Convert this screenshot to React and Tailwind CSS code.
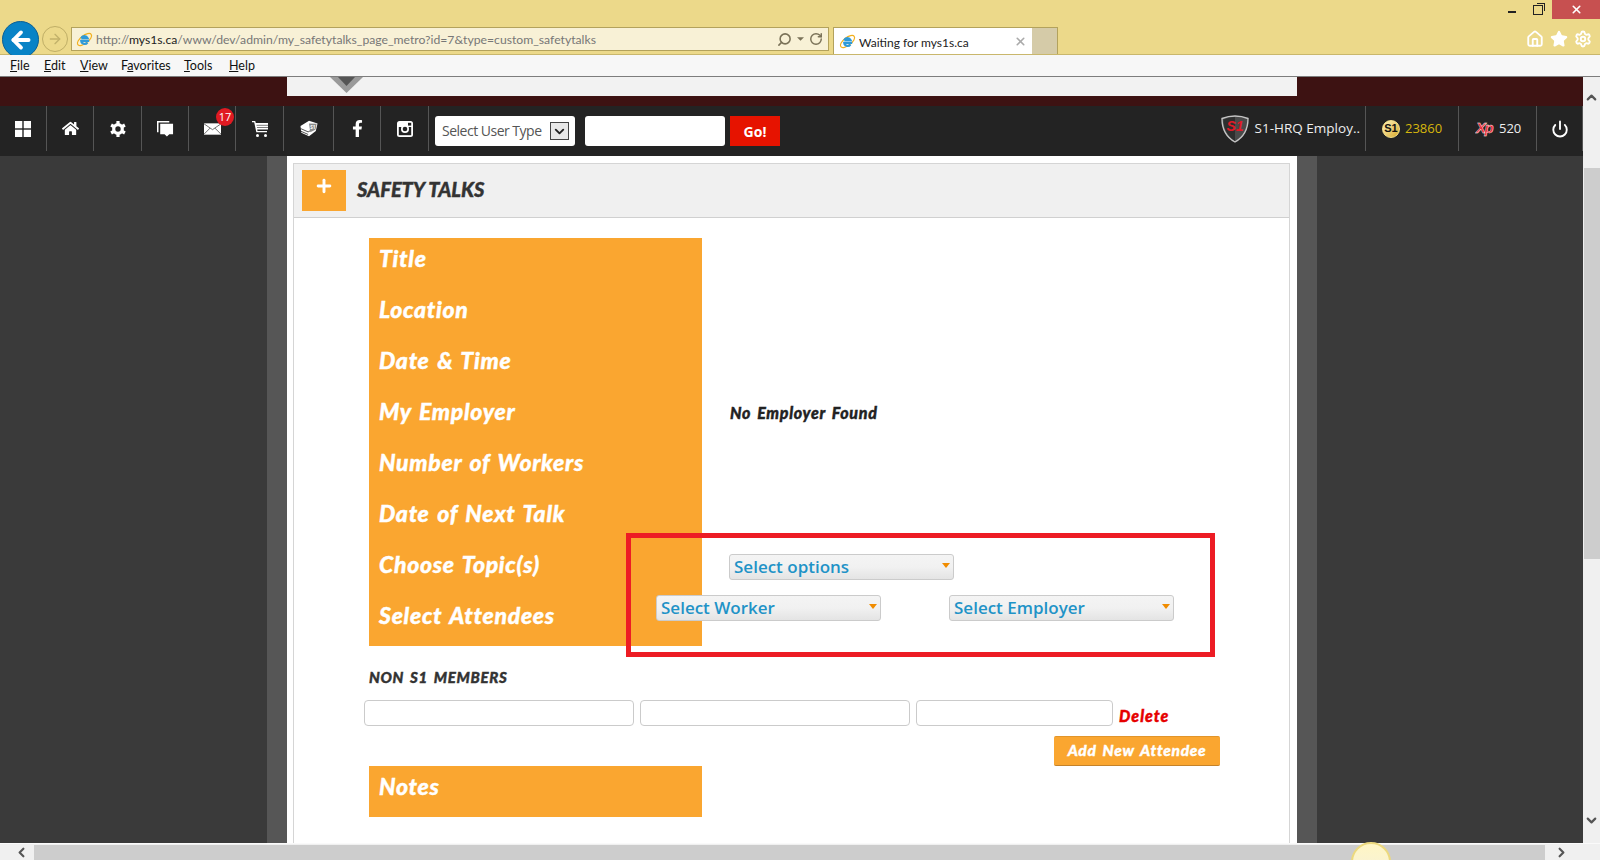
import { ArrowLeft, ArrowRight, ChevronDown, ChevronLeft, ChevronRight, ChevronUp, Home, Plus, Power, RotateCw, Search, Settings, Star, X } from 'lucide-react';
import { FaFacebookF, FaHome } from 'react-icons/fa';

const sans = 'font-["Open_Sans",sans-serif]';
const chrome = 'font-["Lato",sans-serif]';
const heavy = 'font-["Lato",sans-serif] font-black italic tracking-[0.7px] [word-spacing:2px] [-webkit-text-stroke:0.4px]';

function IeLogo({ className }) {
  return (
    <svg viewBox="0 0 20 20" className={className}>
      <ellipse cx="10" cy="10" rx="10" ry="4.5" transform="rotate(-38 10 10)" fill="none" stroke="#f2b01e" strokeWidth="1.4" />
      <path d="M15.5 11.5H6.2a4 4 0 0 0 7.2 2M6.2 8.5h7.4a4 4 0 0 0-7.4 0" fill="none" stroke="#2f9ad8" strokeWidth="2.6" />
    </svg>
  );
}

function GridIcon() {
  return (
    <svg viewBox="0 0 16 16" className="w-[16px] h-[16px]" fill="#fff">
      <rect width="7.300" height="7.300" />
      <rect x="8.700" width="7.300" height="7.300" />
      <rect y="8.700" width="7.300" height="7.300" />
      <rect x="8.700" y="8.700" width="7.300" height="7.300" />
    </svg>
  );
}

function GearIcon() {
  return (
    <svg viewBox="0 0 16 16" className="w-[16px] h-[16px]" fill="none" stroke="#fff">
      <circle cx="8" cy="8" r="4.300" strokeWidth="3.200" />
      <path d="M8 0v3M8 13v3M1.100 4l2.600 1.500M12.300 10.500l2.600 1.500M1.100 12l2.600-1.500M12.300 5.500L14.900 4" strokeWidth="3.200" />
    </svg>
  );
}

function CommentsIcon() {
  return (
    <svg viewBox="0 0 18 18" className="w-[17px] h-[17px]" fill="#fff">
      <path d="M0 1h13v1.600H1.600V13H0z" />
      <path d="M3.400 4H17v11h-4l-2.500 2.600L8 15H3.400z" />
    </svg>
  );
}

function MailIcon() {
  return (
    <svg viewBox="0 0 18 12" className="w-[17px] h-[12px]">
      <rect width="18" height="12" fill="#fff" />
      <path d="M0 .5l9 6.200 9-6.200M0 11.500l6.500-6.500M18 11.500L11.500 5" fill="none" stroke="#444" strokeWidth=".8" />
    </svg>
  );
}

function CartIcon() {
  return (
    <svg viewBox="0 0 16 16" className="w-[16px] h-[16px]" fill="#fff">
      <path d="M0 0h3.200l.6 2H16v6.500H5.200l.3 1.500H15v1.300H4.300L2.200 1.300H0z" />
      <path d="M4.500 4.300H16M5 6.500h11" stroke="#232323" strokeWidth=".6" />
      <circle cx="5.500" cy="14.500" r="1.500" />
      <circle cx="13.500" cy="14.500" r="1.500" />
    </svg>
  );
}

function BooksIcon() {
  return (
    <svg viewBox="0 0 22 20" className="w-[20px] h-[17px]">
      <path d="M1 7l10-6 10 3-2 9-8 6-9-4z" fill="#fff" />
      <path d="M1 10l9 4 9-5M1 13l9 4" fill="none" stroke="#333" strokeWidth="1" />
      <path d="M11 4l9 .5-1.500 7-6 3z" fill="#8a8a8a" />
      <text x="12.500" y="10.500" fontSize="5.500" fontWeight="700" fill="#fff" fontFamily="Open Sans">S1</text>
    </svg>
  );
}

function InstagramIcon() {
  return (
    <svg viewBox="0 0 16 16" className="w-[16px] h-[16px]">
      <rect width="16" height="16" rx="2.500" fill="#fff" />
      <rect x="1.800" y="6" width="12.400" height="8.200" fill="#232323" />
      <rect x="11" y="1.800" width="3.200" height="2.800" fill="#232323" />
      <circle cx="8" cy="8" r="4" fill="#fff" />
      <circle cx="8" cy="8" r="2.300" fill="#232323" />
    </svg>
  );
}

function ShieldLogo() {
  return (
    <svg viewBox="0 0 28 28" className="w-[28px] h-[28px]">
      <path d="M1 3.500C6 1.500 10 1 14 1s8 .5 13 2.500c0 10-4 18.500-13 23.500C5 22 1 13.500 1 3.500z" fill="#4a4a4a" stroke="#c4c4c4" strokeWidth="1.400" />
      <path d="M14 2v24C6 21 2.500 13 2.500 4.500 7 2.800 10 2.200 14 2z" fill="#2e2e2e" />
      <text x="5.500" y="16" fontSize="14" fontWeight="800" fontStyle="italic" fill="#e01a28" fontFamily="Liberation Sans">S1</text>
    </svg>
  );
}

function XpLogo() {
  return (
    <svg viewBox="0 0 24 20" className="w-[24px] h-[20px]">
      <text x="1" y="14" fontSize="15" fontWeight="800" fontStyle="italic" letterSpacing="-1.500" fill="#ef1c2c" stroke="#fff" strokeWidth=".4" fontFamily="Liberation Sans">Xp</text>
    </svg>
  );
}

function Dropdown({ label, className }) {
  return (
    <div className={`w-[225px] h-[26px] flex justify-between rounded-[3px] border border-[#cbcbcb] bg-gradient-to-b from-[#f4f4f4] via-[#f1f1f1] to-[#e4e4e4] pl-1 pr-[3px] ${className}`}>
      <span className={`${sans} text-[17px] font-semibold leading-[23px] text-[#1f93c7]`}>{label}</span>
      <svg viewBox="0 0 8 5" className="w-[8px] h-[5px] mt-[8px] fill-[#f08c00]"><path d="M0 0h8L4 5z" /></svg>
    </div>
  );
}

function FieldLabel({ children }) {
  return (
    <div className={`w-[333px] h-[51px] shrink-0 bg-[#faa630] pl-[10px] pt-[3px] ${heavy} text-[23px] leading-[34px] text-white`}>
      {children}
    </div>
  );
}

function Row({ label, children }) {
  return (
    <div className="flex">
      <FieldLabel>{label}</FieldLabel>
      {children}
    </div>
  );
}

function NavCell({ width, children }) {
  return (
    <div className={`relative ${width} h-[45px] shrink-0 flex items-center justify-center border-r border-[#555]`}>
      {children}
    </div>
  );
}

function Menu() {
  return (
    <div className={`relative z-10 h-[22px] flex items-center bg-[#f7f7f7] border-b border-[#7d7d7d] pl-[10px] pt-[2px] text-[12.500px] text-[#111] ${chrome}`}>
      <span className="w-[34px]"><u>F</u>ile</span>
      <span className="w-[36px]"><u>E</u>dit</span>
      <span className="w-[41px]"><u>V</u>iew</span>
      <span className="w-[63px]">F<u>a</u>vorites</span>
      <span className="w-[45px]"><u>T</u>ools</span>
      <span><u>H</u>elp</span>
    </div>
  );
}

function BrowserBar() {
  return (
    <div className="h-[55px] bg-[#ecd98a] border-b border-[#c9b76c]">
      {/* window buttons */}
      <div className="h-[27px] flex justify-end items-start">
        <div className="w-[8px] h-[2px] bg-[#222] mt-[11px] mr-[17px]" />
        <div className="relative w-[10px] h-[10px] mt-[5px] mr-[9px] border-[1.5px] border-[#222]">
          <div className="absolute -top-[3px] -right-[3px] w-[8px] h-[8px] border-t-[1.5px] border-r-[1.5px] border-[#222]" />
        </div>
        <div className="w-[48px] h-[19px] bg-[#c75050] flex items-center justify-center">
          <X size={13} strokeWidth={3} color="#fff" />
        </div>
      </div>
      {/* address row */}
      <div className="h-[27px] flex items-start">
        <div className="ml-[2px] -mt-[6px] w-[37px] h-[37px] shrink-0 rounded-full bg-[#0883c6] border border-[#0a5f94] flex items-center justify-center">
          <ArrowLeft size={26} strokeWidth={3.5} color="#fff" />
        </div>
        <div className="ml-[3px] -mt-[1px] w-[26px] h-[26px] shrink-0 rounded-full border border-[#bfae66] flex items-center justify-center">
          <ArrowRight size={16} color="#c2b16a" />
        </div>
        <div className={`ml-[3px] w-[758px] h-[24px] shrink-0 flex items-center bg-[#f8f1d6] border border-[#b3a25c] pl-[4px] pr-[5px] ${chrome} text-[12.200px]`}>
          <IeLogo className="w-[17px] h-[17px] shrink-0" />
          <span className="ml-[3px] pt-[3px] text-[#777]">http://<span className="text-[#222]">mys1s.ca</span>/www/dev/admin/my_safetytalks_page_metro?id=7&amp;type=custom_safetytalks</span>
          <Search size={15} strokeWidth={2.5} color="#7a7258" className="ml-auto -scale-x-100" />
          <svg viewBox="0 0 8 4" className="ml-[5px] w-[7px] h-[4px] fill-[#7a7258]"><path d="M0 0h8L4 4z" /></svg>
          <RotateCw size={14} strokeWidth={2.5} color="#7a7258" className="ml-[5px]" />
        </div>
        <div className={`ml-[4px] w-[199px] h-[27px] shrink-0 flex items-center bg-white border-l border-t border-[#b3a25c] pl-[5px] pr-[5px] ${chrome} text-[12px] text-[#222]`}>
          <IeLogo className="w-[17px] h-[17px] shrink-0" />
          <span className="ml-[3px] pt-[3px]">Waiting for mys1s.ca</span>
          <X size={13} strokeWidth={3} color="#aaa" className="ml-auto" />
        </div>
        <div className="w-[26px] h-[27px] shrink-0 bg-[#d5cba8] border-t border-r border-[#b3a25c]" />
        <div className="ml-auto mr-[8px] mt-[3px] flex items-center gap-[6px]">
          <Home size={18} strokeWidth={2.5} color="#fff" />
          <Star size={18} fill="#fff" color="#fff" />
          <Settings size={18} strokeWidth={2.5} color="#fff" />
        </div>
      </div>
    </div>
  );
}

function TopNav() {
  return (
    <div className="h-[50px] flex items-start bg-[#232323]">
      <NavCell width="w-[47px]"><GridIcon /></NavCell>
      <NavCell width="w-[47px]"><FaHome size={17} color="#fff" /></NavCell>
      <NavCell width="w-[48px]"><GearIcon /></NavCell>
      <NavCell width="w-[47px]"><CommentsIcon /></NavCell>
      <NavCell width="w-[47px]">
        <MailIcon />
        <span className={`absolute left-[27px] top-[2px] w-[18px] h-[18px] rounded-full bg-[#e01a22] flex items-center justify-center ${sans} text-[11px] text-white`}>17</span>
      </NavCell>
      <NavCell width="w-[48px]"><CartIcon /></NavCell>
      <NavCell width="w-[50px]"><BooksIcon /></NavCell>
      <NavCell width="w-[47px]"><FaFacebookF size={17} color="#fff" /></NavCell>
      <NavCell width="w-[48px]"><InstagramIcon /></NavCell>

      <div className="ml-[6px] mt-[10px] w-[140px] h-[30px] shrink-0 flex items-center justify-between rounded-[3px] bg-white pl-[7px] pr-[6px]">
        <span className={`${sans} -mt-[2px] text-[14px] text-[#555] tracking-[-0.5px]`}>Select User Type</span>
        <div className="w-[19px] h-[18px] flex items-center justify-center bg-[#e8e8e8] border border-[#444]">
          <ChevronDown size={15} strokeWidth={3} color="#222" />
        </div>
      </div>
      <div className="ml-[10px] mt-[10px] w-[140px] h-[30px] shrink-0 rounded-[3px] bg-white" />
      <div className={`ml-[5px] mt-[10px] w-[50px] h-[30px] shrink-0 flex items-center justify-center bg-[#e61300] ${sans} text-[14px] font-bold text-white`}>Go!</div>

      <div className="ml-auto flex items-start">
        <div className="h-[45px] flex items-center pr-[5px] border-r border-[#555]">
          <ShieldLogo />
          <span className={`ml-[6px] ${sans} text-[13.500px] text-[#eee]`}>S1-HRQ Employ..</span>
        </div>
        <div className="w-[93px] h-[45px] flex items-center pl-[16px] border-r border-[#555]">
          <div className="w-[18px] h-[18px] rounded-full border border-[#f6e28a] bg-gradient-to-br from-[#fff4b8] to-[#d9a90f] flex items-center justify-center font-['Liberation_Sans',sans-serif] text-[11px] font-bold text-[#111]">S1</div>
          <span className={`ml-[5px] ${sans} text-[13px] text-[#d6b60c]`}>23860</span>
        </div>
        <div className="w-[78px] h-[45px] flex items-center pl-[16px] border-r border-[#555]">
          <XpLogo />
          <span className={`${sans} text-[13px] text-[#eee]`}>520</span>
        </div>
        <div className="w-[46px] h-[45px] flex items-center justify-center border-r border-[#555]">
          <Power size={18} strokeWidth={2.5} color="#fff" />
        </div>
      </div>
    </div>
  );
}

function SafetyForm() {
  return (
    <div className="relative pl-[75px] pt-[20px]">
      <Row label="Title" />
      <Row label="Location" />
      <Row label="Date & Time" />
      <Row label="My Employer">
        <span className={`ml-[28px] mt-[10px] ${heavy} text-[16px] tracking-[0.5px] text-[#222]`}>No Employer Found</span>
      </Row>
      <Row label="Number of Workers" />
      <Row label="Date of Next Talk" />
      <Row label="Choose Topic(s)">
        <Dropdown label="Select options" className="ml-[27px] mt-[10px]" />
      </Row>
      <Row label="Select Attendees">
        <div className="relative -ml-[46px] flex gap-[68px] items-start">
          <Dropdown label="Select Worker" />
          <Dropdown label="Select Employer" />
        </div>
      </Row>

      {/* annotation drawn on the screenshot */}
      <div className="absolute left-[332px] top-[315px] w-[589px] h-[124px] border-[5px] border-[#ed1c24] pointer-events-none" />

      <div className={`mt-[21px] ${heavy} text-[15px] leading-[20px] text-[#333]`}>NON S1 MEMBERS</div>

      <div className="-ml-[5px] mt-[13px] flex items-start">
        <div className="w-[270px] h-[26px] rounded-[4px] border border-[#cbcbcb] bg-white" />
        <div className="ml-[6px] w-[270px] h-[26px] rounded-[4px] border border-[#cbcbcb] bg-white" />
        <div className="ml-[6px] w-[197px] h-[26px] rounded-[4px] border border-[#cbcbcb] bg-white" />
        <span className={`ml-[6px] mt-[6px] ${heavy} text-[16px] tracking-[1px] leading-[20px] text-[#e60000]`}>Delete</span>
      </div>

      <div className="mt-[10px] mr-[69px] flex justify-end">
        <div className={`w-[166px] h-[30px] flex items-center justify-center rounded-[2px] bg-[#faa630] border-y border-t-[#e2952a] border-b-[#c4822a] ${heavy} text-[15.500px] text-white`}>
          Add New Attendee
        </div>
      </div>

      <Row label="Notes" />
    </div>
  );
}

export default function App() {
  return (
    <div className="w-[1600px] h-[860px] overflow-hidden flex flex-col bg-[#f0f0f0]">
      <BrowserBar />
      <Menu />

      <div className="h-[766px] flex">
        <div className="w-[1583px] flex flex-col">
          {/* maroon header, mostly scrolled away */}
          <div className="h-[29px] bg-[#3d1212]">
            <div className="ml-[287px] w-[1010px] h-[19px] bg-[#f2f2f2] overflow-hidden">
              <svg viewBox="0 0 33 16" className="ml-[43px] w-[33px] h-[16px]">
                <path d="M0 0h33L16.500 16z" fill="#9a9a9a" />
                <path d="M8 0h17l-8.500 9z" fill="#555" />
              </svg>
            </div>
          </div>
          <TopNav />

          <div className="h-[687px] flex overflow-hidden">
            <div className="w-[267px] shrink-0 bg-[#3a3a3a]" />
            <div className="w-[20px] shrink-0 bg-[#565656]" />
            <div className="w-[1010px] shrink-0 bg-white pl-[6px] pr-[7px] pt-[7px]">
              <div className="h-[700px] border-x border-t border-[#d5d5d5]">
                <div className="h-[54px] flex items-start bg-[#f0f0f0] border-b border-[#d0d0d0]">
                  <div className="ml-[8px] mt-[6px] w-[44px] h-[41px] flex items-start justify-center pt-[6px] bg-[#faa630]">
                    <Plus size={20} strokeWidth={3.5} color="#fff" />
                  </div>
                  <span className={`ml-[11px] mt-[11px] font-["Lato",sans-serif] font-black italic [-webkit-text-stroke:0.4px] text-[20px] leading-[28px] text-[#333]`}>SAFETY TALKS</span>
                </div>
                <SafetyForm />
              </div>
            </div>
            <div className="w-[20px] shrink-0 bg-[#565656]" />
            <div className="w-[266px] shrink-0 bg-[#3a3a3a]" />
          </div>
        </div>

        {/* vertical scrollbar */}
        <div className="w-[17px] flex flex-col items-center">
          <ChevronUp size={15} strokeWidth={3.5} color="#555" className="mt-[13px]" />
          <div className="mt-[63px] ml-[1px] w-[16px] h-[391px] bg-[#cdcdcd]" />
          <ChevronDown size={15} strokeWidth={3.5} color="#555" className="mt-auto mb-[15px]" />
        </div>
      </div>

      {/* horizontal scrollbar */}
      <div className="relative h-[17px] flex items-center border-t border-[#fafafa]">
        <ChevronLeft size={15} strokeWidth={3.5} color="#555" className="ml-[14px]" />
        <div className="ml-[5px] w-[1511px] h-[15px] bg-[#cdcdcd]" />
        <ChevronRight size={15} strokeWidth={3.5} color="#555" className="ml-[9px]" />
        {/* cursor highlight from the screen recording */}
        <div className="absolute left-[1351px] top-[-2px] w-[40px] h-[40px] rounded-full border-2 border-[#ecd97e] bg-gradient-to-b from-[#fff6c4] to-[#f5f0dc]" />
      </div>
    </div>
  );
}
